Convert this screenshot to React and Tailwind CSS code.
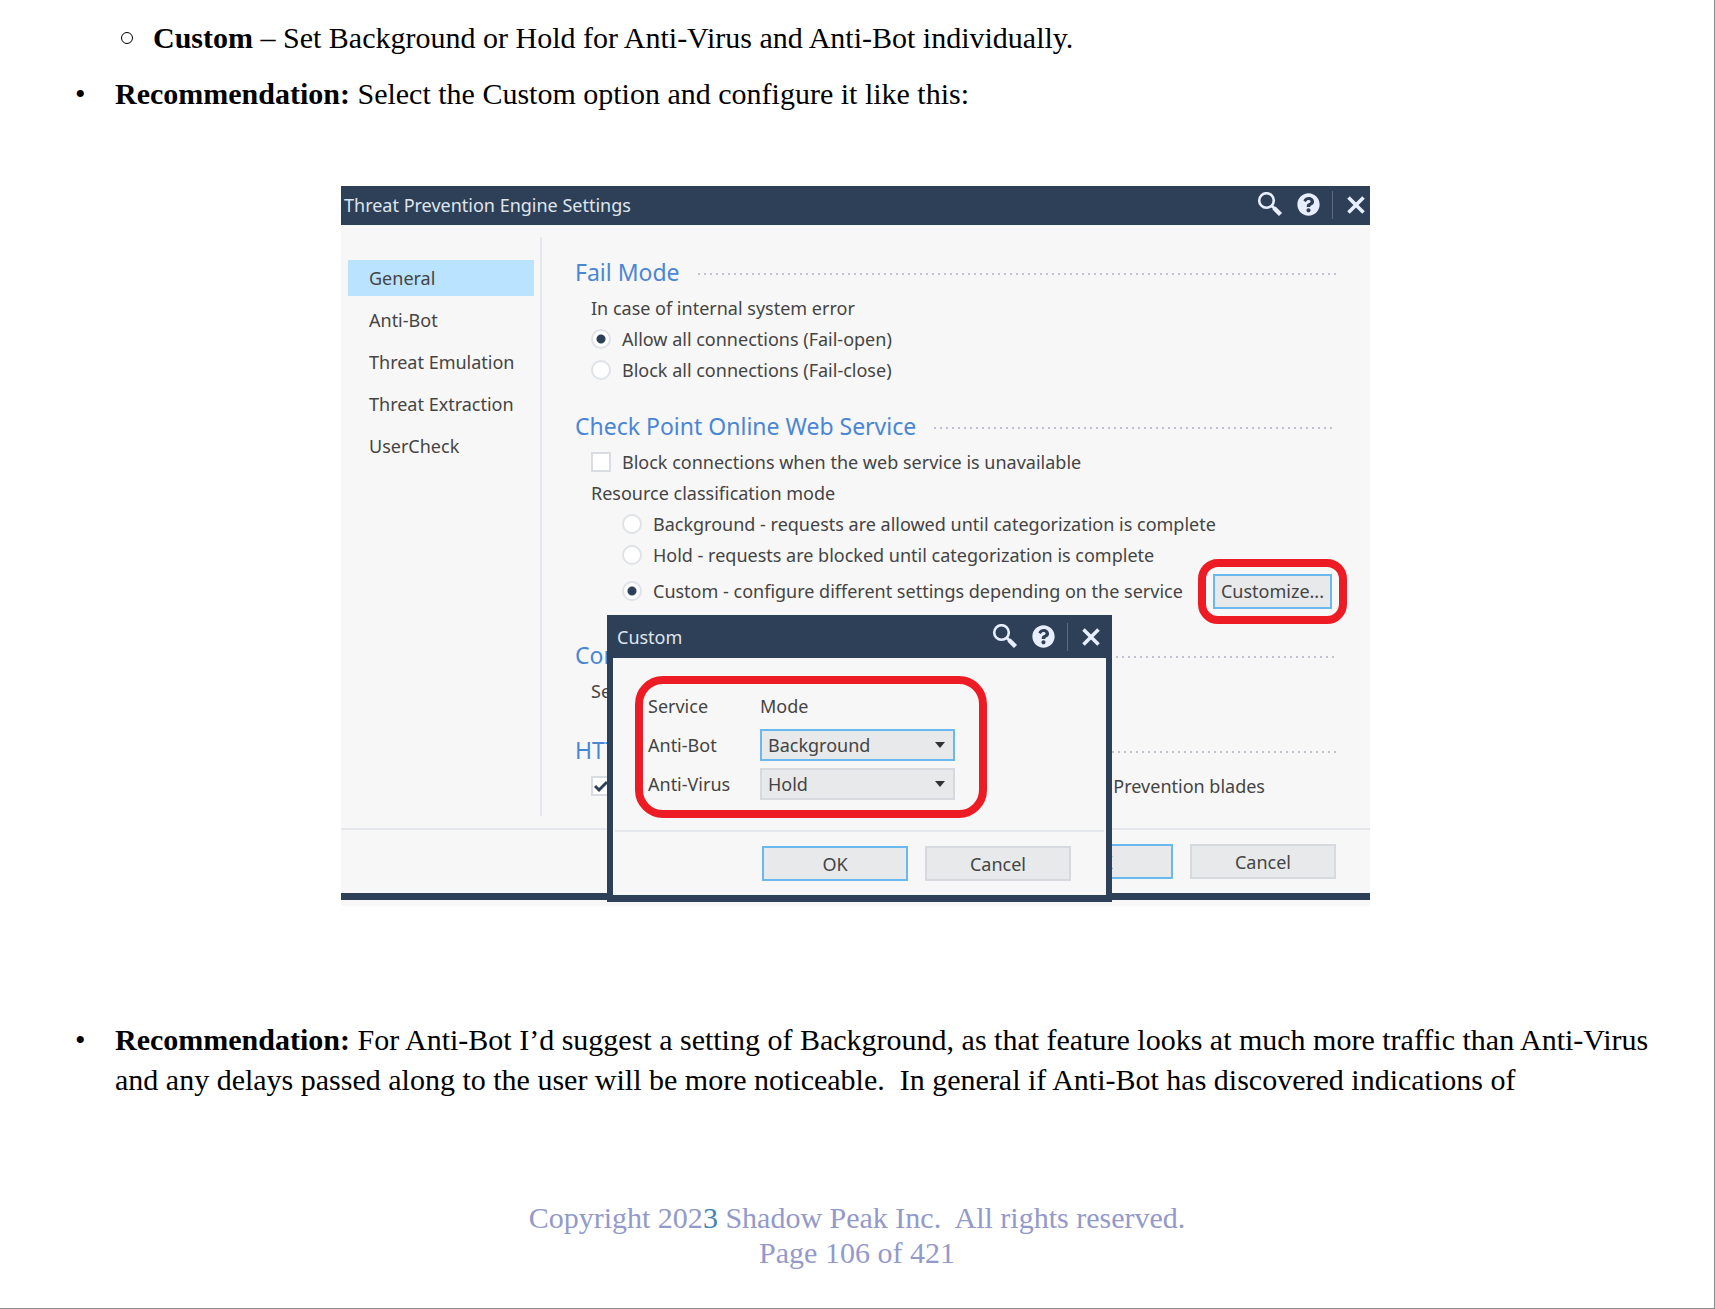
import React, { useState } from 'react';
import { FaQuestionCircle } from 'react-icons/fa';

const tabs = ['General', 'Anti-Bot', 'Threat Emulation', 'Threat Extraction', 'UserCheck'];

const SearchIcon = () => (
  <svg width="26" height="26" viewBox="0 0 26 26" fill="none" stroke="currentColor">
    <circle cx="9.5" cy="8.5" r="7.3" strokeWidth="2.6" />
    <path d="M15 14l3 3" strokeWidth="3" />
    <path d="M17 16l6.5 6.5" strokeWidth="4.4" />
  </svg>
);

const CloseIcon = () => (
  <svg width="18" height="18" viewBox="0 0 18 18" fill="none" stroke="currentColor" strokeWidth="3.6">
    <path d="M1.5 1.5l15 15M16.5 1.5l-15 15" />
  </svg>
);

function TitleBar({ title, className }) {
  return (
    <header className={`flex items-center bg-[#2e4057] text-[#e6eeff] ${className}`}>
      <h2 className="flex-1 text-[18px] text-[#dfe5ee]">{title}</h2>
      <button aria-label="Search" className="mr-[14px]"><SearchIcon /></button>
      <button aria-label="Help"><FaQuestionCircle size={23} /></button>
      <span className="ml-3 mr-[14px] h-7 w-px bg-[#5c6a7d]"></span>
      <button aria-label="Close"><CloseIcon /></button>
    </header>
  );
}

function SectionTitle({ children, className = '' }) {
  return (
    <div className={`flex h-10 items-center gap-4 pr-[34px] ${className}`}>
      <h3 className="whitespace-nowrap text-[23px] text-[#4a86d4]">{children}</h3>
      <span className="mt-1 h-[2px] flex-1 bg-[radial-gradient(circle,#bfc3d0_1px,transparent_1px)] bg-[length:6px_2px]"></span>
    </div>
  );
}

function Radio({ children, className = 'h-[31px]', ...props }) {
  return (
    <label className={`flex items-center gap-[11px] whitespace-nowrap ${className}`}>
      <input
        type="radio"
        className="size-5 appearance-none rounded-full border-2 border-[#dfe2e7] bg-white checked:bg-[radial-gradient(circle,#2e4057_4px,transparent_5px)]"
        {...props}
      />
      {children}
    </label>
  );
}

function DialogButton({ children, primary }) {
  return (
    <button className={`h-[35px] w-[146px] border-2 bg-[#e7e9eb] ${primary ? 'border-[#69b9ee]' : 'border-[#d6d9dd]'}`}>
      {children}
    </button>
  );
}

function ModeSelect({ id, value, onChange, active }) {
  return (
    <div className="relative w-[195px]">
      <select
        id={id}
        value={value}
        onChange={(e) => onChange(e.target.value)}
        className={`block h-8 w-full appearance-none border-2 bg-[#e7e9eb] px-[6px] ${active ? 'border-[#69b9ee]' : 'border-[#d6d9dd]'}`}
      >
        <option>Background</option>
        <option>Hold</option>
      </select>
      <svg className="pointer-events-none absolute right-[10px] top-[13px]" width="10" height="6" viewBox="0 0 10 6" fill="#333">
        <path d="M0 0h10L5 6z" />
      </svg>
    </div>
  );
}

function CustomDialog() {
  const [antiBot, setAntiBot] = useState('Background');
  const [antiVirus, setAntiVirus] = useState('Hold');

  return (
    <div role="dialog" aria-label="Custom" className="absolute left-[266px] top-[429px] w-[505px] bg-[#2e4057]">
      <TitleBar title="Custom" className="h-[43px] pl-[10px] pr-3" />
      <div className="mx-[6px] mb-[7px] bg-[#f7f7f7] pt-[18px]">
        <div className="ml-[22px] grid w-[352px] grid-cols-[112px_1fr] items-center gap-y-[7px] rounded-[28px] border-8 border-[#ed1c24] pb-[10px] pl-[5px] pt-[6px]">
          <span className="flex h-8 items-center">Service</span>
          <span>Mode</span>
          <label htmlFor="anti-bot">Anti-Bot</label>
          <ModeSelect id="anti-bot" value={antiBot} onChange={setAntiBot} active />
          <label htmlFor="anti-virus">Anti-Virus</label>
          <ModeSelect id="anti-virus" value={antiVirus} onChange={setAntiVirus} />
        </div>
        <div className="mx-[2px] mt-3 flex justify-end gap-[17px] border-t-2 border-[#e4e8ec] pb-[14px] pr-[33px] pt-[14px]">
          <DialogButton primary>OK</DialogButton>
          <DialogButton>Cancel</DialogButton>
        </div>
      </div>
    </div>
  );
}

function EngineSettings() {
  const [tab, setTab] = useState('General');
  const [failMode, setFailMode] = useState('open');
  const [mode, setMode] = useState('custom');

  return (
    <div className="relative w-full max-w-[1029px] bg-[#f7f7f7] pb-[6px] font-['Noto_Sans','Open_Sans',sans-serif] text-[18px] leading-6 text-[#444]">
      <TitleBar title="Threat Prevention Engine Settings" className="h-[39px] pb-[2px] pl-[3px] pr-[5px]" />

      <div className="flex py-3">
        {/* Sidebar */}
        <nav className="flex w-[201px] shrink-0 flex-col gap-[6px] border-r-2 border-[#e4e8ec] pl-[7px] pr-[6px] pt-[23px]">
          {tabs.map((name) => (
            <button
              key={name}
              onClick={() => setTab(name)}
              className={`h-9 whitespace-nowrap pl-[21px] text-left ${tab === name ? 'bg-[#bae3ff]' : ''}`}
            >
              {name}
            </button>
          ))}
        </nav>

        <div className="flex-1 pb-[15px] pl-[33px] pt-[15px]">
          <SectionTitle>Fail Mode</SectionTitle>
          <div className="pl-4">
            <p className="flex h-[31px] items-center">In case of internal system error</p>
            <Radio name="fail" checked={failMode === 'open'} onChange={() => setFailMode('open')}>
              Allow all connections (Fail-open)
            </Radio>
            <Radio name="fail" checked={failMode === 'close'} onChange={() => setFailMode('close')}>
              Block all connections (Fail-close)
            </Radio>
          </div>

          <SectionTitle className="mt-[21px]">Check Point Online Web Service</SectionTitle>
          <div className="pl-4">
            <label className="flex h-[31px] items-center gap-[11px]">
              <input type="checkbox" className="size-5 appearance-none border-2 border-[#d9dce1] bg-white" />
              Block connections when the web service is unavailable
            </label>
            <p className="flex h-[31px] items-center">Resource classification mode</p>
            <div className="pl-[31px]">
              <Radio name="mode" checked={mode === 'background'} onChange={() => setMode('background')}>
                Background - requests are allowed until categorization is complete
              </Radio>
              <Radio name="mode" checked={mode === 'hold'} onChange={() => setMode('hold')}>
                Hold - requests are blocked until categorization is complete
              </Radio>
              <div className="flex h-[42px] items-center justify-between pr-[38px]">
                <Radio className="h-full" name="mode" checked={mode === 'custom'} onChange={() => setMode('custom')}>
                  Custom - configure different settings depending on the service
                </Radio>
                <div className="relative">
                  <button className="block h-[35px] w-[119px] border-2 border-[#69b9ee] bg-[#e7e9eb]">Customize...</button>
                  <span className="pointer-events-none absolute -inset-[15px] rounded-[20px] border-8 border-[#ed1c24]"></span>
                </div>
              </div>
            </div>
          </div>

          <SectionTitle className="mt-[23px]">Con</SectionTitle>
          <p className="flex h-[31px] items-center pl-4">Se</p>

          <SectionTitle className="mt-6">HTTP</SectionTitle>
          <label className="relative ml-4 flex h-[31px] w-[674px] items-center justify-between">
            <input type="checkbox" defaultChecked className="size-5 appearance-none border-2 border-[#d9dce1] bg-white" />
            <svg className="pointer-events-none absolute left-[3px]" width="14" height="14" viewBox="0 0 14 14" fill="none" stroke="#2e4057" strokeWidth="3">
              <path d="M1 7l4 4 8-8" />
            </svg>
            Prevention blades
          </label>
        </div>
      </div>

      <div className="flex justify-end gap-[17px] border-b-[7px] border-t-2 border-b-[#2e4057] border-t-[#e4e8ec] pb-[14px] pr-[34px] pt-[14px]">
        <DialogButton primary>OK</DialogButton>
        <DialogButton>Cancel</DialogButton>
      </div>

      <CustomDialog />
    </div>
  );
}

function App() {
  return (
    <div className="flex min-h-screen flex-col border-b border-r border-[#8c8c8c] bg-white pt-[18px] font-['Liberation_Serif',serif] text-[30px] leading-10 text-black">
      <ul className="flex flex-col gap-4 pl-[75px] pr-10">
        <li className="flex gap-5 pl-[45px]">
          <span className="flex w-[13px] items-center justify-center">
            <span className="size-3 rounded-full border border-black"></span>
          </span>
          <p><b>Custom</b> – Set Background or Hold for Anti-Virus and Anti-Bot individually.</p>
        </li>
        <li className="flex">
          <span className="w-10 shrink-0">•</span>
          <p><b>Recommendation:</b> Select the Custom option and configure it like this:</p>
        </li>
      </ul>

      <div className="mt-[72px] flex justify-center pr-[3px]">
        <EngineSettings />
      </div>

      <ul className="mt-[114px] pl-[75px] pr-10">
        <li className="flex">
          <span className="w-10 shrink-0">•</span>
          <p>
            <b>Recommendation:</b> For Anti-Bot I’d suggest a setting of Background, as that feature looks at much more
            traffic than Anti-Virus and any delays passed along to the user will be more noticeable.&nbsp; In general if
            Anti-Bot has discovered indications of
          </p>
        </li>
      </ul>

      <footer className="mt-[100px] text-center leading-[35px] text-[#9399cb]">
        <p>Copyright 202<span className="text-[#4682b4]">3</span> Shadow Peak Inc.&nbsp; All rights reserved.</p>
        <p>Page 106 of 421</p>
      </footer>
    </div>
  );
}

export default App;
